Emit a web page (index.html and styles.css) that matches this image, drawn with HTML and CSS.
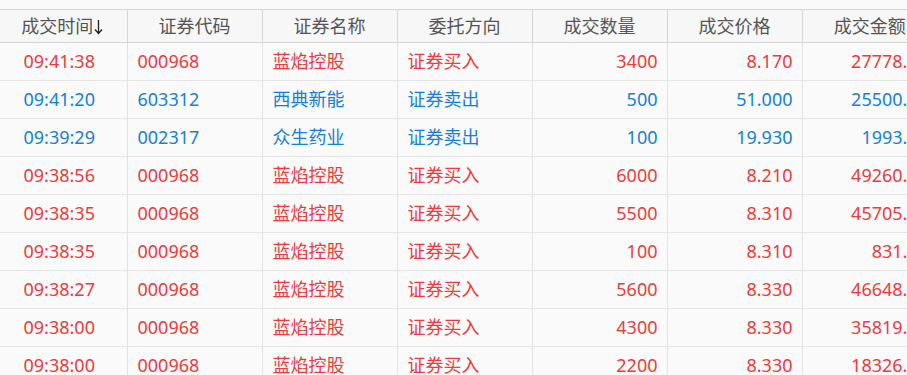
FILE: index.html
```html
<!DOCTYPE html>
<html lang="zh-CN">
<head>
<meta charset="utf-8">
<title>成交</title>
<link rel="stylesheet" href="styles.css">
</head>
<body>
<div class="viewport">
  <table class="grid">
    <colgroup>
      <col class="c"><col class="c"><col class="c"><col class="c"><col class="c"><col class="c"><col class="c">
    </colgroup>
    <thead>
      <tr>
        <th>成交时间<svg class="arrow" width="9" height="16" viewBox="0 0 9 16"><path d="M4.5 1 V14.5 M1 10.5 L4.5 14.5 L8 10.5" fill="none" stroke="#222" stroke-width="1.3"/></svg></th>
        <th>证券代码</th>
        <th>证券名称</th>
        <th>委托方向</th>
        <th>成交数量</th>
        <th>成交价格</th>
        <th>成交金额</th>
      </tr>
    </thead>
    <tbody>
      <tr class="buy"><td class="ctr">09:41:38</td><td>000968</td><td>蓝焰控股</td><td>证券买入</td><td class="num">3400</td><td class="num">8.170</td><td class="num">27778.00</td></tr>
      <tr class="sell"><td class="ctr">09:41:20</td><td>603312</td><td>西典新能</td><td>证券卖出</td><td class="num">500</td><td class="num">51.000</td><td class="num">25500.00</td></tr>
      <tr class="sell"><td class="ctr">09:39:29</td><td>002317</td><td>众生药业</td><td>证券卖出</td><td class="num">100</td><td class="num">19.930</td><td class="num">1993.00</td></tr>
      <tr class="buy"><td class="ctr">09:38:56</td><td>000968</td><td>蓝焰控股</td><td>证券买入</td><td class="num">6000</td><td class="num">8.210</td><td class="num">49260.00</td></tr>
      <tr class="buy"><td class="ctr">09:38:35</td><td>000968</td><td>蓝焰控股</td><td>证券买入</td><td class="num">5500</td><td class="num">8.310</td><td class="num">45705.00</td></tr>
      <tr class="buy"><td class="ctr">09:38:35</td><td>000968</td><td>蓝焰控股</td><td>证券买入</td><td class="num">100</td><td class="num">8.310</td><td class="num">831.00</td></tr>
      <tr class="buy"><td class="ctr">09:38:27</td><td>000968</td><td>蓝焰控股</td><td>证券买入</td><td class="num">5600</td><td class="num">8.330</td><td class="num">46648.00</td></tr>
      <tr class="buy"><td class="ctr">09:38:00</td><td>000968</td><td>蓝焰控股</td><td>证券买入</td><td class="num">4300</td><td class="num">8.330</td><td class="num">35819.00</td></tr>
      <tr class="buy"><td class="ctr">09:38:00</td><td>000968</td><td>蓝焰控股</td><td>证券买入</td><td class="num">2200</td><td class="num">8.330</td><td class="num">18326.00</td></tr>
    </tbody>
  </table>
</div>
</body>
</html>
```
FILE: styles.css
```css
html, body {
  margin: 0;
  padding: 0;
  background: #fafafa;
}
.viewport {
  width: 907px;
  height: 375px;
  overflow: hidden;
  padding-top: 9px;
  box-sizing: border-box;
  background: #fafafa;
}
.grid {
  margin-left: -8px;
  border-collapse: collapse;
  table-layout: fixed;
  width: 945px;
  font-family: "Noto Sans", "Noto Sans CJK SC", sans-serif;
  font-size: 18px;
}
.grid col.c { width: 135px; }
.grid th {
  height: 32px;
  padding: 0;
  font-weight: normal;
  color: #555;
  text-align: center;
  background: #f7f7f7;
  border-top: 1px solid #d6d6d6;
  border-bottom: 1px solid #d6d6d6;
  border-left: 1px solid #d6d6d6;
  white-space: nowrap;
  line-height: 32px;
}
.grid th:first-child { border-left: none; padding-left: 6px; }
.arrow {
  display: inline-block;
  vertical-align: -2px;
  margin-left: 1px;
}
.grid td {
  height: 37px;
  padding: 0 10px;
  line-height: 37px;
  border-bottom: 1px solid #e4e4e4;
  border-left: 1px solid #e2e2e2;
  white-space: nowrap;
  overflow: visible;
}
.grid td:first-child { border-left: none; }
.grid td.ctr { text-align: center; padding: 0; }
.grid td.num { text-align: right; padding-right: 9px; }
.buy td { color: #ee3b3b; }
.sell td { color: #1580d8; }
```
